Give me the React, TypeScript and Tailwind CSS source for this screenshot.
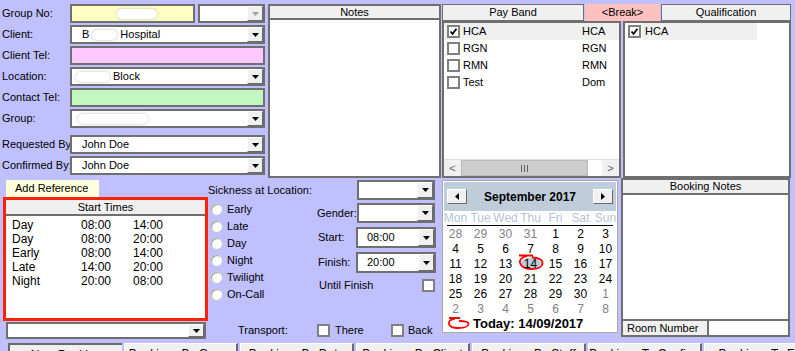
import React from 'react';

const Arrow = ({ disabled }: { disabled?: boolean }) => (
  <div className="w-[16px] h-full shrink-0 bg-[#f0f0f0] border-t border-l border-t-white border-l-white border-r border-b border-r-[#696969] border-b-[#696969] flex items-center justify-center">
    <svg width="7" height="4" viewBox="0 0 7 4">
      <path d="M0 0h7L3.5 4z" fill={disabled ? '#a0a0a0' : '#000'} />
    </svg>
  </div>
);

const Combo = ({ children, className = '', disabled, pad = 'pl-[10px]' }: { children?: React.ReactNode; className?: string; disabled?: boolean; pad?: string }) => (
  <div className={`flex bg-white border-2 border-[#6f6f6f] ${className}`}>
    <div className={`flex-1 flex items-center overflow-hidden whitespace-nowrap ${pad}`}>{children}</div>
    <Arrow disabled={disabled} />
  </div>
);

const Blob = ({ w }: { w: number }) => (
  <span
    className="inline-block h-[10px] rounded-full bg-white shadow-[0_0_3px_#b8b8b8] align-middle"
    style={{ width: w }}
  />
);

const Check = ({ checked }: { checked?: boolean }) => (
  <div className="w-[13px] h-[13px] shrink-0 border-2 border-[#808080] bg-white flex items-center justify-center">
    {checked && (
      <svg width="9" height="9" viewBox="0 0 9 9">
        <path d="M1.5 4.5 L3.5 6.8 L7.5 1.8" stroke="#000" strokeWidth="1.8" fill="none" />
      </svg>
    )}
  </div>
);

const Radio = () => (
  <div className="w-[13px] h-[13px] shrink-0 rounded-full bg-white border border-[#c4c4c4] shadow-[inset_1px_1px_1px_#9a9a9a]" />
);

const FormRow = ({ label, children, className = '' }: { label: string; children: React.ReactNode; className?: string }) => (
  <div className={`flex h-[19px] items-center ${className}`}>
    <div className="w-[70px] pl-[2px] whitespace-nowrap">{label}</div>
    {children}
  </div>
);

const payBands = [
  { name: 'HCA', code: 'HCA', on: true },
  { name: 'RGN', code: 'RGN', on: false },
  { name: 'RMN', code: 'RMN', on: false },
  { name: 'Test', code: 'Dom', on: false },
];

const startTimes = [
  ['Day', '08:00', '14:00'],
  ['Day', '08:00', '20:00'],
  ['Early', '08:00', '14:00'],
  ['Late', '14:00', '20:00'],
  ['Night', '20:00', '08:00'],
];

const weeks = [
  [28, 29, 30, 31, 1, 2, 3],
  [4, 5, 6, 7, 8, 9, 10],
  [11, 12, 13, 14, 15, 16, 17],
  [18, 19, 20, 21, 22, 23, 24],
  [25, 26, 27, 28, 29, 30, 1],
  [2, 3, 4, 5, 6, 7, 8],
];

const tabs = [
  'New Booking',
  'Bookings By Group',
  'Bookings By Date',
  'Bookings By Client',
  'Bookings By Staff',
  'Bookings To Confirm',
  'Bookings To Fill',
];

const CalBtn = ({ dir }: { dir: 'l' | 'r' }) => (
  <div className="w-[20px] h-[15px] bg-[#f0f0f0] border-t border-l border-white border-r border-b border-r-[#696969] border-b-[#696969] flex items-center justify-center">
    <svg width="4" height="7" viewBox="0 0 4 7">
      <path d={dir === 'l' ? 'M4 0v7L0 3.5z' : 'M0 0v7L4 3.5z'} fill="#000" />
    </svg>
  </div>
);

export default function App() {
  return (
    <div className="w-[795px] h-[351px] overflow-hidden bg-[#c0c0ff] text-[11px] text-black font-['Liberation_Sans',Arial,sans-serif] leading-none">
      {/* top */}
      <div className="flex pt-[4px] h-[178px]">
        <div className="w-[265px] flex flex-col gap-[2px]">
          <FormRow label="Group No:">
            <div className="w-[125px] h-full bg-[#ffffc4] border-2 border-[#6f6f6f] flex items-center pl-[45px]">
              <Blob w={40} />
            </div>
            <Combo className="ml-[3px] flex-1 h-full" disabled />
          </FormRow>
          <FormRow label="Client:">
            <Combo className="flex-1 h-full">
              B<span className="mx-[3px]"><Blob w={25} /></span>Hospital
            </Combo>
          </FormRow>
          <FormRow label="Client Tel:">
            <div className="flex-1 h-full bg-[#ffc8ff] border-2 border-[#6f6f6f]" />
          </FormRow>
          <FormRow label="Location:">
            <Combo className="flex-1 h-full" pad="pl-[4px]">
              <span className="mr-[3px]"><Blob w={34} /></span>Block
            </Combo>
          </FormRow>
          <FormRow label="Contact Tel:">
            <div className="flex-1 h-full bg-[#c0f8c0] border-2 border-[#6f6f6f]" />
          </FormRow>
          <FormRow label="Group:">
            <Combo className="flex-1 h-full" pad="pl-[6px]">
              <Blob w={70} />
            </Combo>
          </FormRow>
          <FormRow label="Requested By" className="mt-[5px]">
            <Combo className="flex-1 h-full">John Doe</Combo>
          </FormRow>
          <FormRow label="Confirmed By:">
            <Combo className="flex-1 h-full">John Doe</Combo>
          </FormRow>
        </div>

        <div className="ml-[3px] w-[173px] h-[174px] border-2 border-[#6f6f6f] bg-white flex flex-col">
          <div className="h-[14px] bg-[#f0f0f0] border-b-2 border-[#6f6f6f] flex items-center justify-center">Notes</div>
        </div>

        <div className="ml-[1px] w-[349px] h-[174px] flex flex-col">
          <div className="flex gap-[1px] h-[17px]">
            <div className="w-[142px] bg-[#f0f0f0] border border-[#6f6f6f] flex items-center justify-center">Pay Band</div>
            <div className="w-[75px] bg-[#ffc0c0] flex items-center justify-center">&lt;Break&gt;</div>
            <div className="w-[130px] bg-[#f0f0f0] border border-[#6f6f6f] flex items-center justify-center">Qualification</div>
          </div>
          <div className="flex flex-1">
            <div className="w-[179px] border-2 border-[#6f6f6f] bg-white flex flex-col">
              {payBands.map((p) => (
                <div key={p.name} className={`h-[17px] flex items-center pl-[3px] ${p.on ? 'bg-[#f0f0f0]' : ''}`}>
                  <Check checked={p.on} />
                  <span className="ml-[3px] w-[119px]">{p.name}</span>
                  <span>{p.code}</span>
                </div>
              ))}
              <div className="mt-auto h-[17px] flex border-t border-[#e0e0e0]">
                <div className="w-[17px] bg-[#f0f0f0] flex items-center justify-center text-[#606060]">&lt;</div>
                <div className="w-[127px] bg-[#cdcdcd] border border-[#bcbcbc] flex items-center justify-center">
                  <svg width="7" height="7" viewBox="0 0 7 7">
                    <path d="M0.5 0v7M3.5 0v7M6.5 0v7" stroke="#606060" strokeWidth="1" />
                  </svg>
                </div>
                <div className="flex-1 bg-white" />
                <div className="w-[17px] bg-[#f0f0f0] flex items-center justify-center text-[#606060]">&gt;</div>
              </div>
            </div>
            <div className="ml-[2px] flex-1 border-2 border-[#6f6f6f] bg-white">
              <div className="h-[17px] flex items-center pl-[3px]">
                <Check checked />
                <span className="ml-[1px] w-[115px] h-full flex items-center pl-[3px] bg-[#f0f0f0]">HCA</span>
              </div>
            </div>
          </div>
        </div>
      </div>

      {/* bottom */}
      <div className="flex h-[165px]">
        <div className="w-[208px] pl-[3px] flex flex-col">
          <div className="mt-[2px] ml-[3px] w-[93px] h-[17px] bg-[#ffffdc] flex items-center pl-[9px]">Add Reference</div>
          <div className="w-[205px] h-[124px] border-[3px] border-[#ff2200] bg-white flex flex-col">
            <div className="h-[16px] bg-[#f0f0f0] border-b-2 border-[#6f6f6f] flex items-center justify-center">Start Times</div>
            <div className="pt-[2px] text-[12px]">
              {startTimes.map((r, i) => (
                <div key={i} className="h-[14px] flex items-center pl-[6px]">
                  <span className="w-[69px]">{r[0]}</span>
                  <span className="w-[52px]">{r[1]}</span>
                  <span>{r[2]}</span>
                </div>
              ))}
            </div>
          </div>
          <Combo className="mt-[1px] ml-[3px] w-[200px] h-[17px]" />
        </div>

        <div className="w-[228px] flex flex-col">
          <div className="mt-[2px] h-[20px] flex items-center justify-between">
            <span>Sickness at Location:</span>
            <Combo className="w-[78px] h-full mr-[1px]" />
          </div>
          <div className="flex flex-1">
            <div className="w-[109px] flex flex-col pt-[1px]">
              {['Early', 'Late', 'Day', 'Night', 'Twilight', 'On-Call'].map((s) => (
                <div key={s} className="h-[17px] flex items-center pl-[2px]">
                  <Radio />
                  <span className="ml-[4px]">{s}</span>
                </div>
              ))}
            </div>
            <div className="flex-1 flex flex-col">
              <div className="mt-[3px] h-[20px] flex items-center">
                <span className="w-[40px]">Gender:</span>
                <Combo className="w-[78px] h-full" />
              </div>
              <div className="mt-[4px] h-[21px] flex items-center">
                <span className="w-[39px] pl-[1px]">Start:</span>
                <Combo className="w-[80px] h-full" pad="pl-[9px]">08:00</Combo>
              </div>
              <div className="mt-[4px] h-[21px] flex items-center">
                <span className="w-[39px] pl-[1px]">Finish:</span>
                <Combo className="w-[80px] h-full" pad="pl-[9px]">20:00</Combo>
              </div>
              <div className="mt-[6px] h-[13px] flex items-center justify-between pr-[1px]">
                <span className="pl-[2px]">Until Finish</span>
                <Check />
              </div>
            </div>
          </div>
          <div className="h-[13px] mb-[6px] flex items-center pl-[30px]">
            <span className="w-[79px]">Transport:</span>
            <div className="w-[74px] flex items-center">
              <Check />
              <span className="ml-[5px]">There</span>
            </div>
            <Check />
            <span className="ml-[4px]">Back</span>
          </div>
        </div>

        <div className="ml-[6px] mt-[2px] w-[176px] h-[153px] bg-white border border-[#a8a8a8] p-[1px] flex flex-col">
          <div className="h-[29px] bg-[#bfcddb] flex items-center justify-between px-[3px]">
            <CalBtn dir="l" />
            <span className="font-bold text-[12px]">September 2017</span>
            <CalBtn dir="r" />
          </div>
          <div className="grid grid-cols-7 w-[175px] -ml-[1px] h-[14px] items-center text-[12px] text-[#b4c4d4]">
            {['Mon', 'Tue', 'Wed', 'Thu', 'Fri', 'Sat', 'Sun'].map((d) => (
              <span key={d} className="text-center">{d}</span>
            ))}
          </div>
          <div className="mx-[3px] h-[1px] bg-black" />
          <div className="-ml-[1px] w-[175px] text-[12px]">
            {weeks.map((w, wi) => (
              <div key={wi} className="grid grid-cols-7 h-[15px] items-center">
                {w.map((d, di) => {
                  const grey = (wi === 0 && d > 7) || (wi >= 4 && d < 15);
                  const today = wi === 2 && d === 14;
                  return (
                    <span key={di} className={`relative text-center ${grey ? 'text-[#808080]' : ''}`}>
                      {today && (
                        <svg className="absolute left-[-1px] top-[-4px]" width="28" height="17" viewBox="0 0 28 17">
                          <ellipse cx="14" cy="9.5" rx="10" ry="6" fill="#bccbd9" />
                          <path d="M2 1.5 H16 M10 2 Q2 4 3 9 Q5 15 14 15 Q25 15 25.5 9.5 Q26 4 15 3.5" stroke="#ff0000" strokeWidth="1.8" fill="none" />
                        </svg>
                      )}
                      <span className="relative">{d}</span>
                    </span>
                  );
                })}
              </div>
            ))}
          </div>
          <div className="h-[14px] flex items-center pl-[3px]">
            <svg width="24" height="14" viewBox="0 0 24 14">
              <path d="M2 2 H13 M8 2.5 Q1 4 2 8 Q3 12 11 12 Q21 12 21.5 8 Q22 5 12 5" stroke="#ff0000" strokeWidth="1.8" fill="none" />
            </svg>
            <span className="ml-[2px] font-bold text-[13px]">Today: 14/09/2017</span>
          </div>
        </div>

        <div className="ml-[3px] w-[169px] h-[159px] border-2 border-[#6f6f6f] bg-white flex flex-col">
          <div className="h-[15px] bg-[#f0f0f0] border-b-2 border-[#6f6f6f] flex items-center justify-center">Booking Notes</div>
          <div className="flex-1" />
          <div className="h-[16px] flex border-t-2 border-[#6f6f6f]">
            <div className="w-[86px] bg-[#f0f0f0] border-r-2 border-[#6f6f6f] flex items-center pl-[4px]">Room Number</div>
          </div>
        </div>
      </div>

      {/* tabs */}
      <div className="flex gap-[2px] pl-[8px]">
        {tabs.map((t, i) => (
          <div
            key={t}
            className={`w-[114px] h-[20px] shrink-0 bg-[#f0f0f0] flex justify-center pt-[4px] text-[12px] whitespace-nowrap ${
              i === 0
                ? 'border-t-2 border-l-2 border-[#696969]'
                : 'border-t border-l border-white border-r-2 border-r-[#696969]'
            }`}
          >
            {t}
          </div>
        ))}
      </div>
    </div>
  );
}
